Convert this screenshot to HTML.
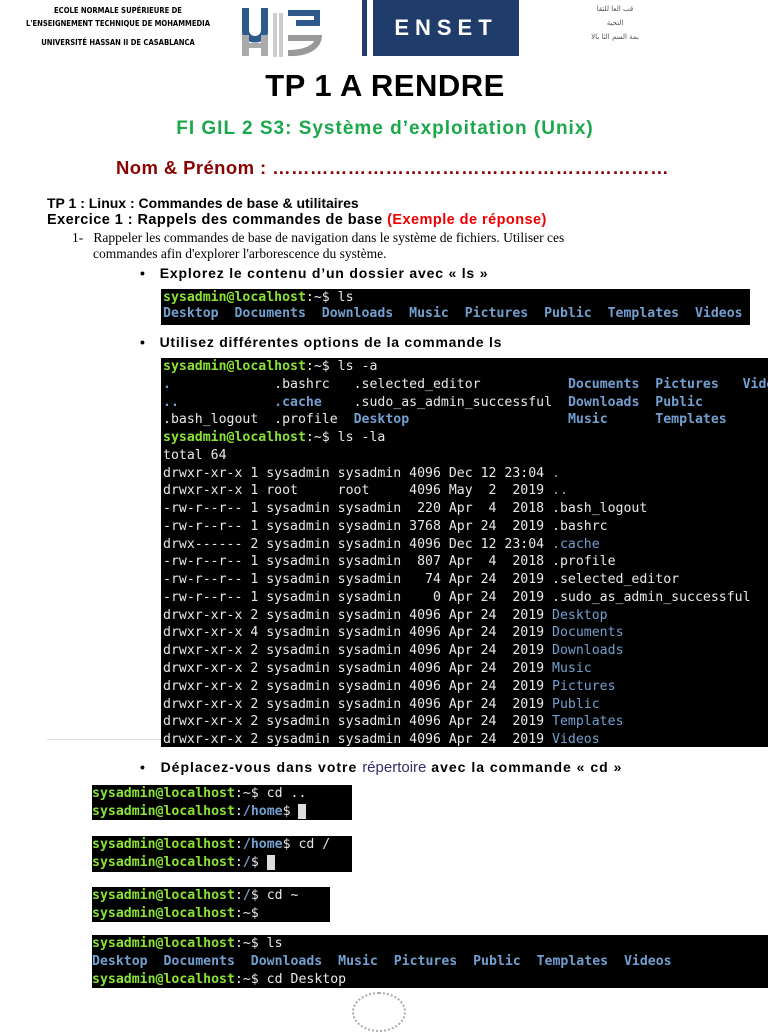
<!DOCTYPE html>
<html><head><meta charset="utf-8"><style>
body{margin:0;width:768px;height:1024px;background:#fff;position:relative;overflow:hidden;font-family:"Liberation Sans",sans-serif}
.a{position:absolute;white-space:nowrap}
.t{position:absolute;background:#000;margin:0;font-family:"DejaVu Sans Mono","Liberation Mono",monospace;font-size:13.2px;color:#e8e8e8;white-space:pre;overflow:hidden;padding:0 0 0 2px;box-sizing:border-box}
.g{color:#8ae234;font-weight:bold}.b{color:#729fcf;font-weight:bold}.c{color:#729fcf}
</style></head><body>
<div class="a" style="left:18px;top:4px;font-size:7.6px;font-weight:bold;line-height:13px;text-align:center;width:200px;font-family:'DejaVu Sans Condensed','Liberation Sans Narrow',sans-serif">ECOLE NORMALE SUPÉRIEURE DE<br>L'ENSEIGNEMENT TECHNIQUE DE MOHAMMEDIA</div>
<div class="a" style="left:18px;top:38px;font-size:7.6px;font-weight:bold;text-align:center;width:200px;font-family:'DejaVu Sans Condensed','Liberation Sans Narrow',sans-serif">UNIVERSITÉ HASSAN II DE CASABLANCA</div>
<svg class="a" style="left:240px;top:5px" width="90" height="52" viewBox="0 0 90 52">
<path d="M2 3h7v22c0 8 12 8 12 0V3h7v24c0 14-26 14-26 0z" fill="#2d5a8a"/>
<rect x="2" y="30" width="7" height="21" fill="#aaa"/><rect x="21" y="30" width="7" height="21" fill="#aaa"/><rect x="9" y="38" width="12" height="5" fill="#aaa"/>
<rect x="33" y="8" width="4" height="44" fill="#ccc"/><rect x="39" y="8" width="4" height="44" fill="#ccc"/>
<path d="M48 5h32v16H56v-6h18v-4H48z" fill="#2d5a8a"/><path d="M48 30h34c0 14-14 22-34 21v-6c14 0 24-4 26-9H48z" fill="#999"/>
</svg>
<div class="a" style="left:362px;top:0;width:5px;height:56px;background:#1f3c6b"></div>
<div class="a" style="left:373px;top:0;width:146px;height:56px;background:#1f3c6b;color:#fff;font-size:22px;font-weight:bold;letter-spacing:6px;text-align:center;line-height:56px">ENSET</div>
<div class="a" style="left:580px;top:2px;font-size:7px;color:#555;line-height:14px;text-align:center;width:70px;font-family:'DejaVu Sans',sans-serif">ﻗﺐ ﺍﻟﻌﺎ ﻟﻠﺘﻘﺎ<br>ﺍﻟﺘﺤﻴﺔ<br>ﺑﻤﺔ ﺍﻟﺴﻢ ﺍﻟﺜﺎ ﺑﺎﻟﺎ</div>
<div class="a" style="left:0;width:770px;text-align:center;top:68px;font-size:31px;font-weight:bold;letter-spacing:0.5px">TP 1 A RENDRE</div>
<div class="a" style="left:0;width:770px;text-align:center;top:118px;font-size:19px;font-weight:bold;color:#1aa84a;letter-spacing:1px">FI GIL 2 S3: Système d’exploitation (Unix)</div>
<div class="a" style="left:116px;top:157px;font-size:18.5px;font-weight:bold;color:#8b0000;letter-spacing:0.4px">Nom &amp; Prénom : ………………………………………………………</div>
<div class="a" style="left:47px;top:195px;font-size:14px;font-weight:bold">TP 1 : Linux : Commandes de base &amp; utilitaires</div>
<div class="a" style="left:47px;top:212px;font-size:14.5px;font-weight:bold;letter-spacing:0.45px">Exercice 1 : Rappels des commandes de base <span style="color:#e00">(Exemple de réponse)</span></div>
<div class="a" style="left:72px;top:230px;font-size:13.5px;font-family:'Liberation Serif',serif;line-height:16px">1-&nbsp;&nbsp;&nbsp;Rappeler les commandes de base de navigation dans le système de fichiers. Utiliser ces<br><span style="padding-left:21px">commandes afin d'explorer l'arborescence du système.</span></div>
<div class="a" style="left:140px;top:265px;font-size:14px;font-weight:bold;letter-spacing:0.8px">•&nbsp;&nbsp;&nbsp;Explorez le contenu d’un dossier avec « ls »</div>
<pre class="t" style="left:161px;top:289px;width:589px;height:36px;line-height:16px;padding-top:1px"><span class="g">sysadmin@localhost</span>:~$ ls
<span class="b">Desktop  Documents  Downloads  Music  Pictures  Public  Templates  Videos</span></pre>
<div class="a" style="left:140px;top:334px;font-size:14px;font-weight:bold;letter-spacing:0.75px">•&nbsp;&nbsp;&nbsp;Utilisez différentes options de la commande ls</div>
<pre class="t" style="left:161px;top:358px;width:607px;height:389px;line-height:17.76px;padding-top:0"><span class="g">sysadmin@localhost</span>:~$ ls -a
<span class="b">.</span>             .bashrc   .selected_editor           <span class="b">Documents  Pictures   Videos</span>
<span class="b">..</span>            <span class="b">.cache</span>    .sudo_as_admin_successful  <span class="b">Downloads  Public</span>
.bash_logout  .profile  <span class="b">Desktop</span>                    <span class="b">Music      Templates</span>
<span class="g">sysadmin@localhost</span>:~$ ls -la
total 64
drwxr-xr-x 1 sysadmin sysadmin 4096 Dec 12 23:04 <span class="c">.</span>
drwxr-xr-x 1 root     root     4096 May  2  2019 <span class="c">..</span>
-rw-r--r-- 1 sysadmin sysadmin  220 Apr  4  2018 .bash_logout
-rw-r--r-- 1 sysadmin sysadmin 3768 Apr 24  2019 .bashrc
drwx------ 2 sysadmin sysadmin 4096 Dec 12 23:04 <span class="c">.cache</span>
-rw-r--r-- 1 sysadmin sysadmin  807 Apr  4  2018 .profile
-rw-r--r-- 1 sysadmin sysadmin   74 Apr 24  2019 .selected_editor
-rw-r--r-- 1 sysadmin sysadmin    0 Apr 24  2019 .sudo_as_admin_successful
drwxr-xr-x 2 sysadmin sysadmin 4096 Apr 24  2019 <span class="c">Desktop</span>
drwxr-xr-x 4 sysadmin sysadmin 4096 Apr 24  2019 <span class="c">Documents</span>
drwxr-xr-x 2 sysadmin sysadmin 4096 Apr 24  2019 <span class="c">Downloads</span>
drwxr-xr-x 2 sysadmin sysadmin 4096 Apr 24  2019 <span class="c">Music</span>
drwxr-xr-x 2 sysadmin sysadmin 4096 Apr 24  2019 <span class="c">Pictures</span>
drwxr-xr-x 2 sysadmin sysadmin 4096 Apr 24  2019 <span class="c">Public</span>
drwxr-xr-x 2 sysadmin sysadmin 4096 Apr 24  2019 <span class="c">Templates</span>
drwxr-xr-x 2 sysadmin sysadmin 4096 Apr 24  2019 <span class="c">Videos</span></pre>
<div class="a" style="left:47px;top:739px;width:114px;height:1px;background:#ddd"></div>
<div class="a" style="left:140px;top:759px;font-size:14px;font-weight:bold;letter-spacing:1px">•&nbsp;&nbsp;&nbsp;Déplacez-vous dans votre <span style="color:#3a2a6a;font-weight:normal;font-size:15px;letter-spacing:0">répertoire</span> avec la commande « cd »</div>
<pre class="t" style="left:92px;top:785px;width:260px;height:35px;line-height:17.6px;padding-left:0"><span class="g">sysadmin@localhost</span>:~$ cd ..
<span class="g">sysadmin@localhost</span>:<span class="b">/home</span>$ <span style="background:#ddd"> </span></pre>
<pre class="t" style="left:92px;top:836px;width:260px;height:36px;line-height:17.6px;padding-left:0"><span class="g">sysadmin@localhost</span>:<span class="b">/home</span>$ cd /
<span class="g">sysadmin@localhost</span>:<span class="b">/</span>$ <span style="background:#ddd"> </span></pre>
<pre class="t" style="left:92px;top:887px;width:238px;height:35px;line-height:17.6px;padding-left:0"><span class="g">sysadmin@localhost</span>:<span class="b">/</span>$ cd ~
<span class="g">sysadmin@localhost</span>:~$</pre>
<pre class="t" style="left:92px;top:935px;width:676px;height:53px;line-height:17.8px;padding-left:0"><span class="g">sysadmin@localhost</span>:~$ ls
<span class="b">Desktop  Documents  Downloads  Music  Pictures  Public  Templates  Videos</span>
<span class="g">sysadmin@localhost</span>:~$ cd Desktop</pre>
<div class="a" style="left:352px;top:992px;width:54px;height:40px;border-radius:50%;border:2px dotted #aaa;box-sizing:border-box"></div>
</body></html>
